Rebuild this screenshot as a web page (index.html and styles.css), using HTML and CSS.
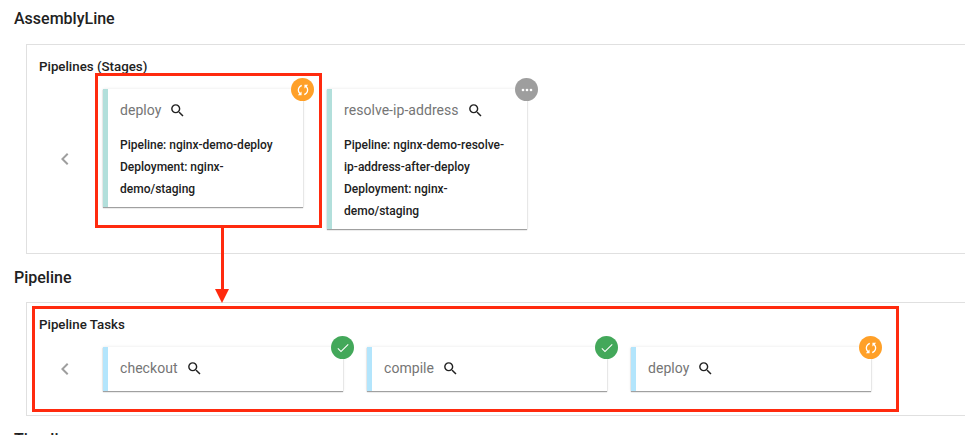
FILE: index.html
```html
<!DOCTYPE html>
<html>

<head>
  <meta charset="UTF-8">
  <link rel="stylesheet" href="styles.css">
</head>

<body>
  <svg class="icon-defs">
    <symbol id="search" viewBox="0 0 24 24">
      <path d="M15.5 14h-.79l-.28-.27A6.471 6.471 0 0 0 16 9.5 6.5 6.5 0 1 0 9.5 16c1.61 0 3.09-.59 4.23-1.57l.27.28v.79l5 4.99L20.49 19l-4.99-5zm-6 0C7.01 14 5 11.99 5 9.5S7.01 5 9.5 5 14 7.01 14 9.5 11.99 14 9.5 14z" />
    </symbol>
    <symbol id="chevron" viewBox="0 0 24 24">
      <path d="M15.41 7.41L14 6l-6 6 6 6 1.41-1.41L10.83 12z" />
    </symbol>
    <symbol id="sync" viewBox="0 0 24 24">
      <path d="M12 4V1L8 5l4 4V6c3.31 0 6 2.69 6 6 0 1.01-.25 1.97-.7 2.8l1.46 1.46C19.54 15.03 20 13.57 20 12c0-4.42-3.58-8-8-8zm0 14c-3.31 0-6-2.69-6-6 0-1.01.25-1.97.7-2.8L5.24 7.74C4.46 8.97 4 10.43 4 12c0 4.42 3.58 8 8 8v3l4-4-4-4v3z" />
    </symbol>
    <symbol id="check" viewBox="0 0 24 24">
      <path d="M9 16.2L4.8 12l-1.1 1.1L9 18.4 20.4 7l-1.1-1.1z" />
    </symbol>
    <symbol id="dots" viewBox="0 0 24 24">
      <circle cx="6" cy="12" r="2" />
      <circle cx="12" cy="12" r="2" />
      <circle cx="18" cy="12" r="2" />
    </symbol>
  </svg>

  <h2 class="section-title">AssemblyLine</h2>
  <div class="panel">
    <h4 class="panel-title">Pipelines (Stages)</h4>
    <div class="carousel">
      <svg class="chevron"><use href="#chevron" /></svg>
      <div class="card card-stage">
        <div class="card-title">deploy <svg class="search-icon"><use href="#search" /></svg></div>
        <div class="card-body">
          <div>Pipeline: nginx-demo-deploy</div>
          <div>Deployment: nginx-demo/staging</div>
        </div>
        <span class="badge badge-running"><svg><use href="#sync" /></svg></span>
      </div>
      <div class="card card-stage">
        <div class="card-title">resolve-ip-address <svg class="search-icon"><use href="#search" /></svg></div>
        <div class="card-body">
          <div>Pipeline: nginx-demo-resolve-ip-address-after-deploy</div>
          <div>Deployment: nginx-demo/staging</div>
        </div>
        <span class="badge badge-pending"><svg><use href="#dots" /></svg></span>
      </div>
    </div>
  </div>

  <h2 class="section-title">Pipeline</h2>
  <div class="panel">
    <h4 class="panel-title">Pipeline Tasks</h4>
    <div class="carousel">
      <svg class="chevron"><use href="#chevron" /></svg>
      <div class="card card-task">
        <div class="card-title">checkout <svg class="search-icon"><use href="#search" /></svg></div>
        <span class="badge badge-done"><svg><use href="#check" /></svg></span>
      </div>
      <div class="card card-task">
        <div class="card-title">compile <svg class="search-icon"><use href="#search" /></svg></div>
        <span class="badge badge-done"><svg><use href="#check" /></svg></span>
      </div>
      <div class="card card-task">
        <div class="card-title">deploy <svg class="search-icon"><use href="#search" /></svg></div>
        <span class="badge badge-running"><svg><use href="#sync" /></svg></span>
      </div>
    </div>
  </div>

  <h2 class="section-title">Timeline</h2>

  <!-- annotations drawn on top of the screenshot -->
  <div class="mark mark-stage"></div>
  <div class="mark mark-tasks"></div>
  <div class="mark-line"></div>
  <div class="mark-head"></div>
</body>

</html>
```

FILE: styles.css
```css
html,
body {
  height: 435px;
  overflow: hidden;
}

body {
  position: relative;
  margin: 0;
  padding-left: 14px;
  background: #fff;
  color: #212121;
  font-family: Roboto, 'Liberation Sans', sans-serif;
}

.icon-defs {
  display: none;
}

.section-title {
  margin: 7px 0 12px 0;
  font-size: 16px;
  line-height: 24px;
  font-weight: 500;
}

.panel + .section-title {
  margin-top: 12px;
}

.section-title:first-of-type {
  margin-bottom: 13px;
}

.panel {
  margin-left: 12px;
  padding: 13px 0 24px 12px;
  border: 1px solid #e0e0e0;
  border-right: none;
}

.panel-title {
  margin: 0 0 13px 0;
  font-size: 13.3px;
  line-height: 18px;
  font-weight: 500;
}

.carousel {
  display: flex;
  align-items: flex-start;
  gap: 24px;
}

.chevron {
  width: 24px;
  height: 24px;
  margin: 0 2px 0 14px;
  align-self: center;
  fill: #9e9e9e;
}

.card {
  position: relative;
  box-sizing: border-box;
  background: #fff;
  border-left: 5px solid;
  box-shadow: 0 1px 1px rgba(0, 0, 0, 0.35), 0 0 3px rgba(0, 0, 0, 0.1);
}

.card-stage {
  width: 200px;
  padding-bottom: 7px;
  border-left-color: #b2dfdb;
}

.card-task {
  width: 240px;
  border-left-color: #b3e5fc;
}

.card-title {
  display: flex;
  align-items: center;
  gap: 8px;
  box-sizing: border-box;
  height: 44px;
  padding: 0 0 2px 12px;
  font-size: 14px;
  letter-spacing: 0.05px;
  color: #757575;
}

.search-icon {
  width: 17px;
  height: 17px;
  fill: #212121;
}

.card-body {
  padding: 1px 12px 0 12px;
  font-size: 12px;
  line-height: 22px;
  font-weight: 500;
}

.badge {
  position: absolute;
  top: -11px;
  right: -11px;
  display: flex;
  align-items: center;
  justify-content: center;
  width: 23px;
  height: 23px;
  border-radius: 50%;
}

.badge svg {
  width: 16px;
  height: 16px;
  fill: #fff;
}

.badge-running {
  background: #ffa028;
}

.badge-running svg {
  transform: rotate(45deg);
}

.badge-pending {
  background: #9e9e9e;
}

.badge-done {
  background: #43a85a;
}

.mark {
  position: absolute;
  box-sizing: border-box;
  border: 3px solid #ff2a0e;
}

.mark-stage {
  left: 95px;
  top: 73px;
  width: 227px;
  height: 155px;
}

.mark-tasks {
  left: 32px;
  top: 306px;
  width: 867px;
  height: 106px;
}

.mark-line {
  position: absolute;
  left: 221px;
  top: 228px;
  width: 3px;
  height: 62px;
  background: #ff2a0e;
}

.mark-head {
  position: absolute;
  left: 215px;
  top: 289px;
  border-left: 7.5px solid transparent;
  border-right: 7.5px solid transparent;
  border-top: 14px solid #ff2a0e;
}
```
